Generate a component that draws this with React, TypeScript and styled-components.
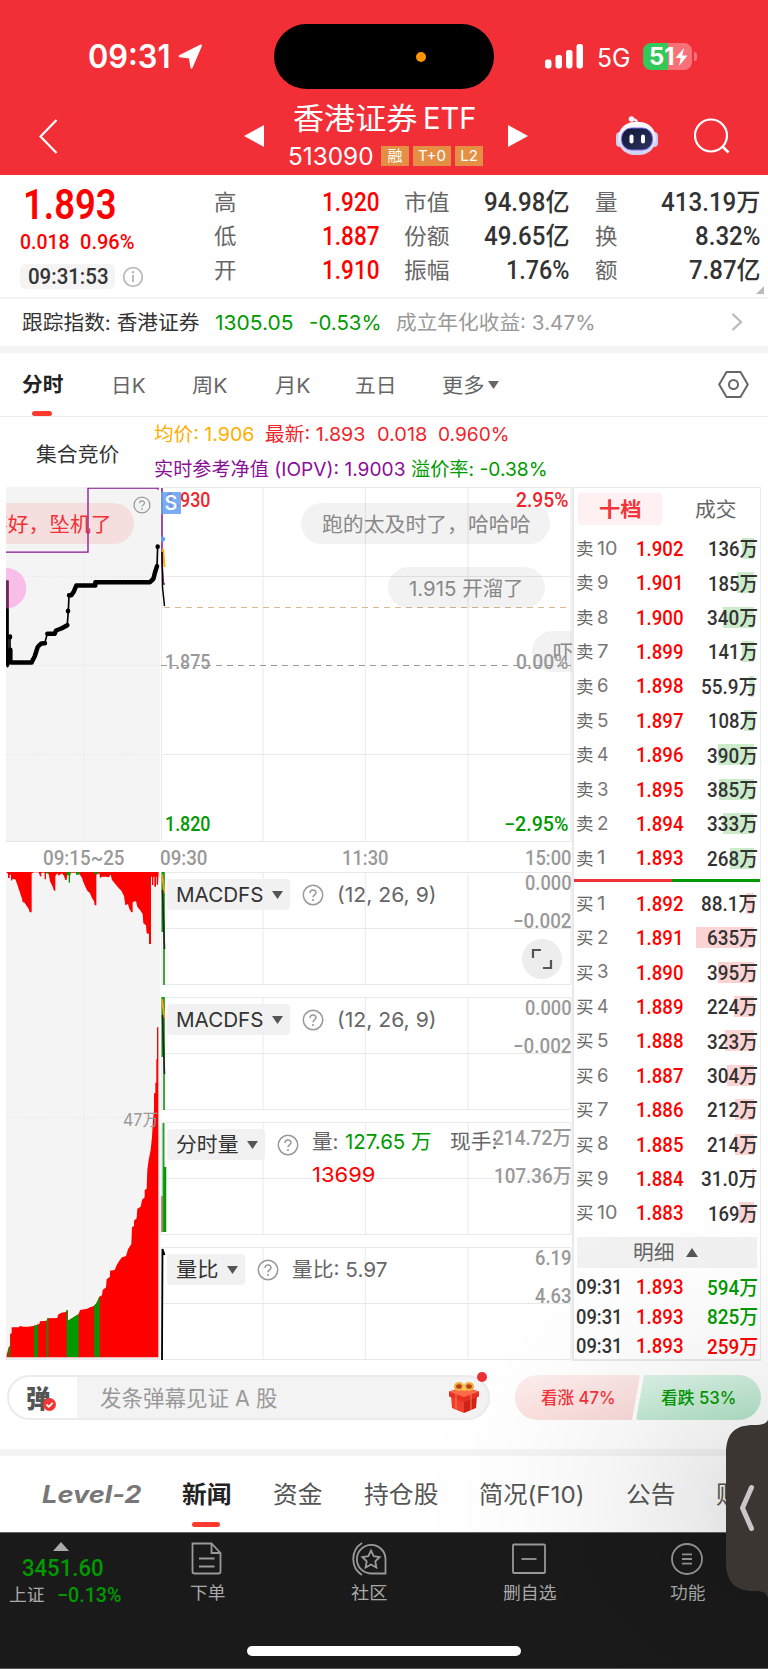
import React, { useLayoutEffect, useRef, useState } from 'react';
import styled, { createGlobalStyle, css } from 'styled-components';

const RED = '#f22f37';
const UP = '#ff0000';
const DOWN = '#009a00';
const LINE = '#e9e9e9';

const sans = `Inter, 'Noto Sans CJK SC', sans-serif`;
const din = `Roboto, 'Noto Sans CJK SC', sans-serif`;

const Global = createGlobalStyle`
  * { box-sizing: border-box; }
  body { margin: 0; background: #fff; font-family: ${sans}; color: #333; }
  svg { display: block; flex: none; }
`;

/* ---------- text squeezed to a column width ---------- */

type TextProps = {
  $size?: number;
  $color?: string;
  $weight?: number;
  $num?: boolean;
};

const textStyle = css<TextProps>`
  font-family: ${(p) => (p.$num ? din : sans)};
  font-size: ${(p) => p.$size ?? 20}px;
  font-weight: ${(p) => p.$weight ?? 400};
  color: ${(p) => p.$color ?? '#333'};
  line-height: 1.2;
`;

const FitBox = styled.span<TextProps & { $w: number; $ml: number }>`
  ${textStyle}
  display: inline-block;
  flex: none;
  width: ${(p) => p.$w}px;
  margin-left: ${(p) => p.$ml}px;
  white-space: pre;
`;

const FitInner = styled.span`
  display: inline-block;
  transform-origin: 0 50%;
  margin-left: -0.5px;
`;

function Fit({
  w,
  ml = 0,
  size,
  color,
  weight,
  num,
  children,
}: {
  w: number;
  ml?: number;
  size?: number;
  color?: string;
  weight?: number;
  num?: boolean;
  children: string;
}) {
  const ref = useRef<HTMLSpanElement>(null);
  const [scale, setScale] = useState(1);
  useLayoutEffect(() => {
    if (ref.current) {
      const natural = parseFloat(getComputedStyle(ref.current).width);
      if (natural > 0) setScale((w + 1.5) / natural);
    }
  }, [w, children]);
  return (
    <FitBox $w={w} $ml={ml} $size={size} $color={color} $weight={weight} $num={num}>
      <FitInner ref={ref} style={{ transform: `translateY(1px) scaleX(${scale})` }}>
        {children}
      </FitInner>
    </FitBox>
  );
}

/* ---------- shared ---------- */

const Page = styled.div`
  position: relative;
  width: 768px;
  height: 1669px;
  overflow: hidden;
  background: #fff;
  display: flex;
  flex-direction: column;
`;

const Overlay = styled.div<{ $x?: number; $r?: number; $y: number }>`
  position: absolute;
  ${(p) => (p.$r !== undefined ? `right: ${p.$r}px;` : `left: ${p.$x ?? 0}px;`)}
  top: ${(p) => p.$y}px;
  transform: translateY(-50%);
  display: flex;
  align-items: center;
`;

const Band = styled.div<{ $h: number }>`
  flex: none;
  height: ${(p) => p.$h}px;
  background: #f4f4f4;
`;

/* ---------- header ---------- */

const Header = styled.header`
  flex: none;
  height: 175px;
  background: ${RED};
  display: flex;
  flex-direction: column;
`;

const StatusBar = styled.div`
  height: 97px;
  padding: 16px 0 0 88px;
  display: flex;
  align-items: center;
`;

const Island = styled.div`
  width: 220px;
  height: 65px;
  margin-left: 71px;
  border-radius: 33px;
  background: #000;
  display: flex;
  align-items: center;
  padding-left: 142px;
  &::after {
    content: '';
    width: 10px;
    height: 10px;
    border-radius: 50%;
    background: #ff9500;
  }
`;

const Battery = styled.div`
  width: 49px;
  height: 27px;
  margin-left: 14px;
  border-radius: 8px;
  background: linear-gradient(90deg, #34c759 51%, #f77278 51%);
  display: flex;
  align-items: center;
  padding-left: 6px;
`;

const BatteryTip = styled.div`
  width: 3px;
  height: 9px;
  margin-left: 2px;
  border-radius: 0 4px 4px 0;
  background: #f77278;
`;

const NavBar = styled.div`
  height: 78px;
  display: flex;
  align-items: flex-start;
  padding-left: 39px;
`;

const TitleBlock = styled.div`
  width: 196px;
  margin: 0 24px 0 24px;
  display: flex;
  flex-direction: column;
`;

const TitleLine = styled.div<{ $h: number }>`
  height: ${(p) => p.$h}px;
  display: flex;
  align-items: center;
`;

const Tag = styled.span<{ $w: number }>`
  flex: none;
  width: ${(p) => p.$w}px;
  height: 20px;
  margin-right: 4px;
  background: #e58f45;
  color: #fff;
  font-size: 15px;
  line-height: 20px;
  text-align: center;
`;

const Tags = styled.div`
  margin-left: 9px;
  display: flex;
`;

const NavIcon = styled.div<{ $ml: number; $mt: number }>`
  margin-left: ${(p) => p.$ml}px;
  margin-top: ${(p) => p.$mt}px;
`;

function StatusIcons() {
  return (
    <svg width="39" height="25" viewBox="0 0 39 25" style={{ marginLeft: 51 }}>
      <rect x="0" y="15.5" width="6.5" height="9" rx="2.4" fill="#fff" />
      <rect x="10.5" y="11" width="6.5" height="13.5" rx="2.4" fill="#fff" />
      <rect x="21" y="6" width="6.5" height="18.5" rx="2.4" fill="#fff" />
      <rect x="31.5" y="0" width="6.5" height="24.5" rx="2.4" fill="#fff" />
    </svg>
  );
}

function Robot() {
  return (
    <svg width="44" height="42" viewBox="0 0 44 42">
      <defs>
        <linearGradient id="shell" x1="0" y1="0" x2="0" y2="1">
          <stop offset="0" stopColor="#ffffff" />
          <stop offset="1" stopColor="#cfd0f2" />
        </linearGradient>
        <linearGradient id="visor" x1="0" y1="0" x2="1" y2="1">
          <stop offset="0" stopColor="#0f1534" />
          <stop offset="1" stopColor="#2c3560" />
        </linearGradient>
      </defs>
      <path d="M21 8c2-1 0-4-3-3" fill="none" stroke="#e8e8fb" strokeWidth="2.4" />
      <circle cx="16.5" cy="4" r="2.8" fill="#f3f3ff" />
      <rect x="1" y="17" width="8" height="15" rx="4" fill="#c9cdf3" />
      <rect x="35" y="17" width="8" height="15" rx="4" fill="#c9cdf3" />
      <rect x="3" y="7" width="38" height="33" rx="16.5" fill="url(#shell)" />
      <rect x="6.5" y="13" width="31" height="22" rx="10" fill="url(#visor)" stroke="#7a6bf0" strokeWidth="1" />
      <rect x="14.5" y="19.5" width="4" height="9" rx="2" fill="#fff" />
      <rect x="26" y="19.5" width="4" height="9" rx="2" fill="#fff" />
    </svg>
  );
}

function TopHeader() {
  return (
    <Header>
      <StatusBar>
        <Fit w={81} size={32} weight={600} color="#fff">09:31</Fit>
        <svg width="25" height="25" viewBox="0 0 25 25" style={{ marginLeft: 9 }}>
          <path d="M23 1.5 13.5 23.5 11.8 13.4 1.6 12.2Z" fill="#fff" stroke="#fff" strokeWidth="2" strokeLinejoin="round" />
        </svg>
        <Island />
        <StatusIcons />
        <Fit ml={13} w={32} size={25} weight={400} color="#fff">5G</Fit>
        <Battery>
          <Fit w={24} size={24} weight={700} color="#fff">51</Fit>
          <svg width="13" height="18" viewBox="0 0 12 18" style={{ marginLeft: 2 }}>
            <path d="M8.5 0 0 10h5.2L3.5 18 12 7.5H6.8Z" fill="#fff" />
          </svg>
        </Battery>
        <BatteryTip />
      </StatusBar>
      <NavBar>
        <NavIcon $ml={0} $mt={22}>
          <svg width="20" height="35" viewBox="0 0 20 35">
            <path d="M17.5 1 1.5 17.5 17.5 34" fill="none" stroke="#fff" strokeWidth="2.2" />
          </svg>
        </NavIcon>
        <NavIcon $ml={185} $mt={28}>
          <svg width="20" height="22" viewBox="0 0 20 22">
            <path d="M20 0v22L0 11Z" fill="#fff" />
          </svg>
        </NavIcon>
        <TitleBlock>
          <TitleLine $h={40}>
            <Fit ml={5.5} w={123} size={30} color="#fff">香港证券</Fit>
            <Fit ml={7} w={52} size={30} color="#fff">ETF</Fit>
          </TitleLine>
          <TitleLine $h={38}>
            <Fit w={84} size={24} color="#fff">513090</Fit>
            <Tags>
              <Tag $w={28}>融</Tag>
              <Tag $w={38}>T+0</Tag>
              <Tag $w={28}>L2</Tag>
            </Tags>
          </TitleLine>
        </TitleBlock>
        <NavIcon $ml={0} $mt={28}>
          <svg width="20" height="22" viewBox="0 0 20 22">
            <path d="M0 0v22L20 11Z" fill="#fff" />
          </svg>
        </NavIcon>
        <NavIcon $ml={87} $mt={18}>
          <Robot />
        </NavIcon>
        <NavIcon $ml={35} $mt={21}>
          <svg width="36" height="36" viewBox="0 0 36 36">
            <circle cx="17" cy="17.5" r="16" fill="none" stroke="#fff" strokeWidth="2.2" />
            <path d="m28 28 6.5 6.5" stroke="#fff" strokeWidth="2.6" />
          </svg>
        </NavIcon>
      </NavBar>
    </Header>
  );
}

/* ---------- quote ---------- */

const Quote = styled.section`
  position: relative;
  flex: none;
  height: 124px;
  display: flex;
  border-bottom: 2px solid #f3f3f3;
`;

const PriceBlock = styled.div`
  width: 214px;
  padding: 7px 0 0 20px;
  display: flex;
  flex-direction: column;
`;

const PriceLine = styled.div<{ $h: number }>`
  height: ${(p) => p.$h}px;
  display: flex;
  align-items: center;
`;

const TimePill = styled.div`
  width: 95px;
  height: 25px;
  border-radius: 6px;
  background: #f4f4f4;
  padding-left: 8px;
  display: flex;
  align-items: center;
`;

const StatColumn = styled.div<{ $w: number; $ml: number }>`
  width: ${(p) => p.$w}px;
  margin-left: ${(p) => p.$ml}px;
  padding-top: 9px;
  display: flex;
  flex-direction: column;
`;

const StatRow = styled.div`
  height: 34.2px;
  display: flex;
  align-items: center;
  justify-content: space-between;
`;

type Stat = [string, number, string, number];

function Stats({ rows, w, ml, color }: { rows: Stat[]; w: number; ml: number; color: string }) {
  return (
    <StatColumn $w={w} $ml={ml}>
      {rows.map(([k, kw, v, vw]) => (
        <StatRow key={k}>
          <Fit w={kw} size={22} color="#666">{k}</Fit>
          <Fit w={vw} size={25.5} weight={500} num color={color}>{v}</Fit>
        </StatRow>
      ))}
    </StatColumn>
  );
}

const IndexRow = styled.div`
  flex: none;
  height: 46px;
  margin-bottom: 1px;
  padding-left: 22px;
  display: flex;
  align-items: center;
`;

function QuotePanel() {
  return (
    <>
      <Quote>
        <PriceBlock>
          <PriceLine $h={45}>
            <Fit ml={3.5} w={92} size={42} weight={600} num color={UP}>1.893</Fit>
          </PriceLine>
          <PriceLine $h={29}>
            <Fit w={48} size={21} weight={500} num color={UP}>0.018</Fit>
            <Fit ml={12} w={53} size={21} weight={500} num color={UP}>0.96%</Fit>
          </PriceLine>
          <PriceLine $h={41}>
            <TimePill>
              <Fit w={79} size={22} weight={500} num>09:31:53</Fit>
            </TimePill>
            <svg width="22" height="22" viewBox="0 0 22 22" style={{ marginLeft: 7 }}>
              <circle cx="11" cy="11" r="9.3" fill="none" stroke="#bbb" strokeWidth="1.8" />
              <path d="M11 9v7" stroke="#bbb" strokeWidth="2" />
              <circle cx="11" cy="6.3" r="1.3" fill="#bbb" />
            </svg>
          </PriceLine>
        </PriceBlock>
        <Stats w={164} ml={0} color={UP} rows={[['高', 21, '1.920', 56], ['低', 21, '1.887', 56], ['开', 21, '1.910', 56]]} />
        <Stats w={164} ml={26} color="#333" rows={[['市值', 44, '94.98亿', 84], ['份额', 44, '49.65亿', 84], ['振幅', 44, '1.76%', 62]]} />
        <Stats w={164} ml={27} color="#333" rows={[['量', 21, '413.19万', 98], ['换', 21, '8.32%', 64], ['额', 21, '7.87亿', 70]]} />
        <Overlay $r={4} $y={115}>
          <svg width="8" height="8" viewBox="0 0 8 8"><path d="M8 0v8H0Z" fill="#bbb" /></svg>
        </Overlay>
      </Quote>
      <IndexRow>
        <Fit w={176}>跟踪指数: 香港证券</Fit>
        <Fit ml={17} w={77} color={DOWN}>1305.05</Fit>
        <Fit ml={17} w={71} color={DOWN}>-0.53%</Fit>
        <Fit ml={16} w={198} color="#999">成立年化收益: 3.47%</Fit>
        <svg width="12" height="18" viewBox="0 0 12 18" style={{ marginLeft: 137 }}>
          <path d="m1.5 1 8.5 8-8.5 8" fill="none" stroke="#bbb" strokeWidth="2.4" />
        </svg>
      </IndexRow>
      <Band $h={7} />
    </>
  );
}

/* ---------- period tabs ---------- */

const Tabs = styled.nav`
  flex: none;
  height: 64px;
  padding-left: 22px;
  display: flex;
  align-items: center;
  border-bottom: 1px solid #ededed;
`;

const Tab = styled.div<{ $active?: boolean; $ml: number; $bar?: number; $drop?: number }>`
  position: relative;
  margin-left: ${(p) => p.$ml}px;
  display: flex;
  align-items: center;
  ${(p) =>
    p.$active &&
    css`
      &::after {
        content: '';
        position: absolute;
        left: calc(50% - ${p.$bar! / 2}px);
        bottom: -${p.$drop}px;
        width: ${p.$bar}px;
        height: 5px;
        border-radius: 2.5px;
        background: #ff3b30;
      }
    `}
`;

function PeriodTabs() {
  return (
    <Tabs>
      <Tab $active $ml={0} $bar={20} $drop={19}><Fit w={40} size={20.5} weight={700} color="#222">分时</Fit></Tab>
      <Tab $ml={49}><Fit w={33} color="#666">日K</Fit></Tab>
      <Tab $ml={48}><Fit w={34} color="#666">周K</Fit></Tab>
      <Tab $ml={49}><Fit w={34} color="#666">月K</Fit></Tab>
      <Tab $ml={46}><Fit w={40} color="#666">五日</Fit></Tab>
      <Tab $ml={47}>
        <Fit w={41} color="#666">更多</Fit>
        <svg width="11" height="8" viewBox="0 0 11 8" style={{ marginLeft: 5 }}><path d="M0 0h11L5.5 8Z" fill="#666" /></svg>
      </Tab>
      <svg width="31" height="27" viewBox="0 0 31 27" style={{ marginLeft: 219 }}>
        <path d="M8.5 1h14L29.8 13.5 22.5 26h-14L1.2 13.5Z" fill="none" stroke="#666" strokeWidth="2" strokeLinejoin="round" />
        <circle cx="15.5" cy="13.5" r="4.5" fill="none" stroke="#666" strokeWidth="2" />
      </svg>
    </Tabs>
  );
}

const Legend = styled.div`
  flex: none;
  height: 70px;
  padding-left: 36px;
  display: flex;
  align-items: center;
`;

const LegendLines = styled.div`
  margin-left: 36px;
  display: flex;
  flex-direction: column;
`;

const LegendLine = styled.div`
  height: 34.5px;
  display: flex;
  align-items: center;
`;

const LegendTitle = styled.div`
  padding-top: 3px;
`;

function ChartLegend() {
  return (
    <Legend>
      <LegendTitle><Fit w={82}>集合竞价</Fit></LegendTitle>
      <LegendLines>
        <LegendLine>
          <Fit w={99} size={19} color="#ffae00">均价: 1.906</Fit>
          <Fit ml={12} w={99} size={19} color="#f0252b">最新: 1.893</Fit>
          <Fit ml={13} w={49} size={19} color="#f0252b">0.018</Fit>
          <Fit ml={12} w={70} size={19} color="#f0252b">0.960%</Fit>
        </LegendLine>
        <LegendLine>
          <Fit w={250} size={19} color="#8b0f96">实时参考净值 (IOPV): 1.9003</Fit>
          <Fit ml={7} w={135} size={19} color={DOWN}>溢价率: -0.38%</Fit>
        </LegendLine>
      </LegendLines>
    </Legend>
  );
}

/* ---------- charts ---------- */

const Board = styled.section`
  flex: none;
  height: 874px;
  padding-left: 6px;
  display: flex;
`;

const AuctionColumn = styled.div`
  width: 154px;
  height: 873px;
  display: flex;
  flex-direction: column;
`;

const MainColumn = styled.div`
  width: 411px;
  height: 873px;
  margin-left: 0.5px;
  display: flex;
  flex-direction: column;
`;

const Pane = styled.div<{ $h: number }>`
  position: relative;
  flex: none;
  height: ${(p) => p.$h}px;
  overflow: hidden;
`;

const AxisRow = styled.div`
  flex: none;
  height: 30px;
  display: flex;
  align-items: center;
`;

const Gap = styled.div`
  flex: none;
  height: 12px;
`;

const Danmu = styled.div<{ $x: number; $y: number; $w: number; $hot?: boolean }>`
  position: absolute;
  left: ${(p) => p.$x}px;
  top: ${(p) => p.$y}px;
  width: ${(p) => p.$w}px;
  height: 41px;
  border-radius: 21px;
  background: ${(p) => (p.$hot ? 'rgba(255,110,110,.16)' : 'rgba(0,0,0,.05)')};
  display: flex;
  align-items: center;
  padding-left: 21px;
`;

const Signal = styled.div`
  position: absolute;
  left: 0.5px;
  top: 5px;
  width: 20px;
  height: 22px;
  background: rgba(98, 160, 245, 0.85);
  color: #fff;
  font: 500 20px/22px ${sans};
  text-align: center;
`;

function Help({ r = 10 }: { r?: number }) {
  return (
    <svg width={r * 2 + 2} height={r * 2 + 2} viewBox="0 0 22 22">
      <circle cx="11" cy="11" r="9.7" fill="none" stroke="#999" strokeWidth="1.5" />
      <path d="M8 9c0-4 6-4 6-.4 0 2.3-3 2.2-3 4.6" fill="none" stroke="#999" strokeWidth="1.5" />
      <circle cx="11" cy="16" r="1.1" fill="#999" />
    </svg>
  );
}

const auctionLine =
  '22,300 22,560 30,545 30,468 30,545 95,545 104,528 112,497 120,496 124,488 134,488 142,460 164,459 166,450 180,448 184,440 196,438 202,430 205,391 207,344 214,343 229,315 286,314 286,304 450,303 454,296 462,293 465,276 471,257 473,198';

function AuctionChart() {
  return (
    <Pane $h={355}>
      <svg width="154" height="355" viewBox="18 21 462 1065">
        <rect x="18" y="21" width="462" height="1065" fill="#f4f4f4" />
        <path d="M252 21V1086M18 290H480M18 824H480" stroke="#e6e6e6" strokeWidth="3" strokeDasharray="5 6" />
        <path d="M18 556H480" stroke="#ececec" strokeWidth="3" />
        <path d="M18 1085H480" stroke="#e4e4e4" strokeWidth="3" />
      </svg>
      <Danmu $x={-45} $y={16} $w={173} $hot>
        <Fit ml={5} w={123} size={20} color="#f23036">不好，坠机了</Fit>
      </Danmu>
      <Overlay $x={0} $y={177.5}>
        <svg width="154" height="355" viewBox="18 21 462 1065">
          <circle cx="18" cy="323" r="61" fill="#f8bde8" />
          <path d="M18 215H264V23H474V28" fill="none" stroke="#8b1295" strokeWidth="4" />
          <polyline points={auctionLine} fill="none" stroke="#000" strokeWidth="5" />
          <path d="M22 300V384" stroke="#6b2a58" strokeWidth="9" />
          <path d="M22 384V556" stroke="#000" strokeWidth="9" />
          <path
            d="M30 468V470M31 508V545M34 546H95M95 545L104 528 113 500M116 496 124 489 135 488M142 460H164L168 450 184 444 202 434M204 391V392M207 344H214L222 332 229 315H286V305H450L460 295 465 276 471 257M473 198V199"
            fill="none"
            stroke="#000"
            strokeWidth="13.5"
            strokeLinecap="round"
            strokeLinejoin="round"
          />
        </svg>
      </Overlay>
      <Overlay $x={127} $y={17.5}><Help r={8} /></Overlay>
    </Pane>
  );
}

const macdShape =
  'M20 36V40H24V54H29V44H33V64L37 58H46L50 68 54 80 58 92 62 104 66 116 68 126 74 128 80 138 86 146 89 157H95V40L103 37H116L120 48 124 50V38H134V58H138V38L146 42 150 64 158 80 162 92H166V48L172 40 176 47 186 40 192 48 196 60H200L202 38H236L246 54 250 66 256 80 262 92 270 100 276 114 282 124 284 136H289V44L298 40 300 54 306 50 318 50 326 52 332 44 336 60 346 72 354 82 364 92 372 108 376 136 384 132 388 146 394 157H398V126L408 124 412 140 420 150 428 162 430 190 438 196 440 220 447 222V252H453V50H456V75H460V50H463V80H468V50H470V74H474L476 36Z';

const volumeShape =
  'M20 742V735L26 712 30 708V672L35 670V652H56L60 648 70 650H84L100 648 118 642 120 634 140 632 142 625 172 624 174 614 184 608 198 606 200 600H204V632L236 612 240 600 262 596 270 592 282 588 290 578 296 565 298 560 306 556 308 540 318 532 320 508 330 500V482L344 480 350 466 358 452 366 442 378 438 384 418 394 402 396 352 402 348V332L410 325 412 296 422 290 426 270 434 262V240L440 236 442 180 446 150 452 120 456 80 459 30 462 0V-50H466V-82H469V-152H471V-248H475V742Z';

function AuctionVolume() {
  return (
    <Pane $h={488}>
      <svg width="154" height="488" viewBox="18 36 462 1464">
        <defs><clipPath id="vol"><path d={volumeShape} /></clipPath></defs>
        <rect x="18" y="36" width="462" height="1460" fill="#f4f4f4" />
        <path d="M252 36V1496M18 772H480" stroke="#e6e6e6" strokeWidth="3" strokeDasharray="5 6" />
        <path d={macdShape} fill="#f00" />
        <path d="M200 36h12v10h-2v22h-4v-22h-6zM282 36h10v6h-10zM138 36h8v4h-8zM228 36h10v8h-10z" fill={DOWN} />
        <g transform="translate(0 750)">
          <path d={volumeShape} fill="#f00" />
          <path clipPath="url(#vol)" d="M26 560h5v182h-5zM102 560h12v182h-12zM140 560h5v182h-5zM200 560h36v182h-36zM282 500h17v242h-17z" fill={DOWN} />
          <path d="M104 645V742M113 640V742M283 588V742M290 578V742" stroke="#a33c00" strokeWidth="1.5" opacity=".5" />
        </g>
        <path d="M18 1497H480" stroke="#e4e4e4" strokeWidth="5" />
      </svg>
      <Overlay $r={3} $y={246}><Fit w={34} size={17.5} color="#999">47万</Fit></Overlay>
    </Pane>
  );
}

function Grid({ h, mid, children }: { h: number; mid?: boolean; children?: React.ReactNode }) {
  return (
    <svg width="411" height={h} viewBox={`0 0 411 ${h}`}>
      <path d={`M0.5 .5H410V${h - 0.5}H.5ZM102 0V${h}M204.3 0V${h}M307 0V${h}`} fill="none" stroke={LINE} strokeWidth="1" />
      <path d={mid ? `M0 ${h / 2}H410` : `M0 89.5H410M0 267.5H410`} stroke={LINE} strokeWidth="1" />
      {children}
    </svg>
  );
}

function PriceChart() {
  return (
    <Pane $h={355}>
      <Grid h={355}>
        <path d="M3 120.5H410" stroke="#dcb98f" strokeWidth="1.2" strokeDasharray="6 5" />
        <path d="M0 178.5H410" stroke="#999" strokeWidth="1.2" strokeDasharray="6 5" />
        <path d="M1 1V75L2.5 97H4" fill="none" stroke="#8b1295" strokeWidth="1.5" />
        <path d="M2 62 3.5 80" stroke="#ffae00" strokeWidth="2" />
        <path d="M1 65 1.5 100 3.5 119" fill="none" stroke="#000" strokeWidth="1.5" />
        <circle cx="1.5" cy="52" r="2.5" fill="#5c9cf5" />
      </Grid>
      <Danmu $x={140.5} $y={16} $w={249}><Fit w={207} size={20} color="#888">跑的太及时了，哈哈哈</Fit></Danmu>
      <Danmu $x={227.5} $y={80} $w={157}><Fit w={113} size={20} color="#888">1.915 开溜了</Fit></Danmu>
      <Danmu $x={371.5} $y={144} $w={140}><Fit w={100} size={20} color="#888">吓死我了呀</Fit></Danmu>
      <Overlay $x={5} $y={13}><Fit w={44} size={19.5} weight={500} num color="#f0252b">1.930</Fit></Overlay>
      <Signal>S</Signal>
      <Overlay $r={4} $y={13}><Fit w={51} size={19.5} weight={500} num color="#f0252b">2.95%</Fit></Overlay>
      <Overlay $x={5} $y={175}><Fit w={44} size={19.5} weight={500} num color="#999">1.875</Fit></Overlay>
      <Overlay $r={4} $y={175}><Fit w={51} size={19.5} weight={500} num color="#999">0.00%</Fit></Overlay>
      <Overlay $x={5} $y={336.5}><Fit w={44} size={19.5} weight={500} num color={DOWN}>1.820</Fit></Overlay>
      <Overlay $r={4} $y={336.5}><Fit w={63} size={19.5} weight={500} num color={DOWN}>−2.95%</Fit></Overlay>
    </Pane>
  );
}

const IndicatorHead = styled.div<{ $y: number }>`
  position: absolute;
  left: 6.5px;
  top: ${(p) => p.$y}px;
  height: 31px;
  display: flex;
  align-items: center;
`;

const Picker = styled.div<{ $w: number }>`
  width: ${(p) => p.$w}px;
  height: 31px;
  margin-right: 12px;
  padding: 0 7px 0 9px;
  border-radius: 4px;
  background: #f1f1f1;
  display: flex;
  align-items: center;
  justify-content: space-between;
`;

const ExpandButton = styled.div`
  position: absolute;
  left: 361px;
  top: 67px;
  width: 40px;
  height: 40px;
  border-radius: 50%;
  background: #ededed;
  display: flex;
  align-items: center;
  justify-content: center;
`;

function Indicator({
  name,
  nameW,
  w,
  top,
  low,
  topW,
  lowW,
  shift = 0,
  plot,
  corner,
  children,
}: {
  name: string;
  nameW: number;
  w: number;
  top: string;
  low: string;
  topW: number;
  lowW: number;
  shift?: number;
  plot: React.ReactNode;
  corner?: React.ReactNode;
  children: React.ReactNode;
}) {
  return (
    <Pane $h={113}>
      <Grid h={113} mid>{plot}</Grid>
      <IndicatorHead $y={7}>
        <Picker $w={w}>
          <Fit w={nameW} size={20.5}>{name}</Fit>
          <svg width="11" height="8" viewBox="0 0 11 8"><path d="M0 0h11L5.5 8Z" fill="#555" /></svg>
        </Picker>
        <Help />
        {children}
      </IndicatorHead>
      <Overlay $r={1.5} $y={10 + shift}><Fit w={topW} size={20} weight={500} num color="#999">{top}</Fit></Overlay>
      <Overlay $r={1.5} $y={48 + shift}><Fit w={lowW} size={20} weight={500} num color="#999">{low}</Fit></Overlay>
      {corner}
    </Pane>
  );
}

const macdPlot = (
  <>
    <path d="M3 0V113" stroke="#3aa83a" strokeWidth="2" />
    <path d="M1.5 0V60" stroke={DOWN} strokeWidth="2" />
    <path d="M1 2 3.5 21" stroke="#ff9a1a" strokeWidth="1.8" />
    <path d="M1.5 18 3.5 77" stroke="#222" strokeWidth="1.6" />
  </>
);

function Macd({ expandable }: { expandable?: boolean }) {
  return (
    <Indicator
      name="MACDFS"
      nameW={86}
      w={123}
      top="0.000"
      low="−0.002"
      topW={45}
      lowW={57}
      plot={macdPlot}
      corner={
        expandable && (
          <ExpandButton>
            <svg width="22" height="22" viewBox="0 0 22 22">
              <path d="M2 10V2h8M20 12v8h-8" fill="none" stroke="#555" strokeWidth="2.2" />
            </svg>
          </ExpandButton>
        )
      }
    >
      <Fit ml={13} w={98} size={20.5} color="#666">(12, 26, 9)</Fit>
    </Indicator>
  );
}

const VolumeInfo = styled.div`
  align-self: flex-start;
  margin: -4px 0 0 12px;
  display: flex;
  flex-direction: column;
`;

const VolumeLine = styled.div`
  height: 33px;
  display: flex;
  align-items: center;
`;

function MainCharts() {
  return (
    <MainColumn>
      <PriceChart />
      <AxisRow>
        <Fit w={46} size={20} weight={500} num color="#999">09:30</Fit>
        <Fit ml={136} w={45} size={20} weight={500} num color="#999">11:30</Fit>
        <Fit ml={138} w={45} size={20} weight={500} num color="#999">15:00</Fit>
      </AxisRow>
      <Macd expandable />
      <Gap />
      <Macd />
      <Gap />
      <Indicator
        name="分时量"
        nameW={61}
        w={98}
        top="214.72万"
        low="107.36万"
        topW={77}
        lowW={76}
        shift={5}
        plot={
          <>
            <path d="M1 74V110" stroke="#e05a4a" strokeWidth="1.5" />
            <path d="M2.5 1V110" stroke="#2c9d2c" strokeWidth="2" />
            <path d="M4 45V110" stroke={DOWN} strokeWidth="2.5" />
          </>
        }
      >
        <VolumeInfo>
          <VolumeLine>
            <Fit ml={1} w={25} size={20.5} color="#666">量:</Fit>
            <Fit ml={8} w={85} size={20.5} color={DOWN}>127.65 万</Fit>
            <Fit ml={20} w={46} size={20.5} color="#666">现手:</Fit>
          </VolumeLine>
          <VolumeLine>
            <Fit ml={1} w={62} size={20.5} color={UP}>13699</Fit>
          </VolumeLine>
        </VolumeInfo>
      </Indicator>
      <Gap />
      <Indicator
        name="量比"
        nameW={41}
        w={78}
        top="6.19"
        low="4.63"
        topW={35}
        lowW={35}
        plot={<path d="M1 113 1.5 2 3.5 8" fill="none" stroke="#000" strokeWidth="1.8" />}
      >
        <Fit ml={13} w={94} size={20.5} color="#666">量比: 5.97</Fit>
      </Indicator>
    </MainColumn>
  );
}

/* ---------- order book ---------- */

const Book = styled.aside`
  width: 189px;
  height: 874px;
  border: solid #e9e9e9;
  border-width: 1px 1px 2px 2px;
  display: flex;
  flex-direction: column;
`;

const BookTabs = styled.div`
  height: 32px;
  margin: 5px 0 6px 4px;
  display: flex;
  align-items: center;
`;

const BookTab = styled.div`
  width: 84px;
  height: 32px;
  border-radius: 3px;
  background: #fff1f1;
  display: flex;
  align-items: center;
  justify-content: center;
`;

const BookRow = styled.div<{ $h?: number }>`
  position: relative;
  flex: none;
  height: ${(p) => p.$h ?? 34.4}px;
  padding: 0 3px;
  display: flex;
  align-items: center;
`;

const Depth = styled.div<{ $side: 'sell' | 'buy' }>`
  position: absolute;
  right: 6px;
  top: 7px;
  height: 21px;
  background: ${(p) => (p.$side === 'sell' ? '#cbebcb' : '#fbd3d3')};
`;

const Level = styled.div`
  width: 60px;
  display: flex;
  align-items: center;
`;

const Amount = styled.div`
  position: relative;
  flex: 1;
  display: flex;
  justify-content: flex-end;
`;

const Split = styled.div`
  flex: none;
  height: 3px;
  margin: 4px 0;
  background: linear-gradient(90deg, #ee3338 98px, ${DOWN} 98px);
`;

const DetailBar = styled.div`
  flex: none;
  width: 180px;
  height: 31px;
  margin: 7px 0 4px 3px;
  background: #f2f2f2;
  display: flex;
  align-items: center;
  padding-left: 57px;
`;

type Quotes = [string, string, string, number][];

const sells: Quotes = [
  ['10', '1.902', '136万', 12],
  ['9', '1.901', '185万', 17],
  ['8', '1.900', '340万', 31],
  ['7', '1.899', '141万', 12],
  ['6', '1.898', '55.9万', 5],
  ['5', '1.897', '108万', 9.5],
  ['4', '1.896', '390万', 36],
  ['3', '1.895', '385万', 35],
  ['2', '1.894', '333万', 31],
  ['1', '1.893', '268万', 24],
];

const buys: Quotes = [
  ['1', '1.892', '88.1万', 8],
  ['2', '1.891', '635万', 58],
  ['3', '1.890', '395万', 36],
  ['4', '1.889', '224万', 20],
  ['5', '1.888', '323万', 29],
  ['6', '1.887', '304万', 27],
  ['7', '1.886', '212万', 19],
  ['8', '1.885', '214万', 19],
  ['9', '1.884', '31.0万', 2],
  ['10', '1.883', '169万', 15],
];

const trades: [string, string, string, string][] = [
  ['09:31', '1.893', '594万', DOWN],
  ['09:31', '1.893', '825万', DOWN],
  ['09:31', '1.893', '259万', UP],
];

const amountWidth = (s: string) => (s.includes('.') ? 55 : s.startsWith('1') ? 48.5 : 49.5);

function Levels({ side, rows }: { side: 'sell' | 'buy'; rows: Quotes }) {
  return (
    <>
      {rows.map(([n, price, amount, depth]) => (
        <BookRow key={n}>
          <Depth $side={side} style={{ width: depth }} />
          <Level>
            <Fit w={16} size={17} color="#666">{side === 'sell' ? '卖' : '买'}</Fit>
            <Fit ml={5} w={n === '10' ? 19 : n === '1' ? 7 : 10} size={19} color="#777">{n}</Fit>
          </Level>
          <Fit w={46} size={20.5} weight={500} num color={UP}>{price}</Fit>
          <Amount><Fit w={amountWidth(amount)} size={20} weight={500} num>{amount}</Fit></Amount>
        </BookRow>
      ))}
    </>
  );
}

function OrderBook() {
  return (
    <Book>
      <BookTabs>
        <BookTab><Fit w={41} size={20.5} weight={700} color="#f5333a">十档</Fit></BookTab>
        <Fit ml={34} w={40} size={20.5} color="#666">成交</Fit>
      </BookTabs>
      <Levels side="sell" rows={sells} />
      <Split />
      <Levels side="buy" rows={buys} />
      <DetailBar>
        <Fit w={40} size={20.5} color="#666">明细</Fit>
        <svg width="12" height="9" viewBox="0 0 12 9" style={{ marginLeft: 12 }}><path d="M0 9h12L6 0Z" fill="#555" /></svg>
      </DetailBar>
      {trades.map(([t, p, a, c], i) => (
        <BookRow key={i} $h={29.5}>
          <Level><Fit w={45} size={20.5} weight={500} num>{t}</Fit></Level>
          <Fit w={46} size={20.5} weight={500} num color={UP}>{p}</Fit>
          <Amount><Fit w={49.5} size={20} weight={500} num color={c}>{a}</Fit></Amount>
        </BookRow>
      ))}
    </Book>
  );
}

/* ---------- comment bar ---------- */

const CommentRow = styled.div`
  flex: none;
  height: 88px;
  padding: 14px 0 0 7px;
  display: flex;
  align-items: flex-start;
`;

const CommentBox = styled.div`
  position: relative;
  width: 483px;
  height: 45px;
  border: 2px solid #ebebeb;
  border-radius: 23px;
  background: linear-gradient(90deg, #fff 68px, #f3f3f3 68px);
  display: flex;
  align-items: center;
  padding-left: 16px;
`;

const AlertDot = styled.div`
  position: absolute;
  right: 1px;
  top: -5px;
  width: 10px;
  height: 10px;
  border-radius: 50%;
  background: #ee2f35;
`;

const CheckBadge = styled.div`
  position: absolute;
  left: 34px;
  top: 21px;
`;

const Vote = styled.div<{ $up?: boolean }>`
  flex: none;
  width: 125px;
  height: 45px;
  margin-left: ${(p) => (p.$up ? 25 : -4)}px;
  padding-left: 26px;
  display: flex;
  align-items: center;
  ${(p) =>
    p.$up
      ? css`
          border-radius: 23px 3px 3px 23px;
          background: linear-gradient(170deg, #fdeeee, #fad9d7);
          clip-path: polygon(0 0, 100% 0, calc(100% - 8px) 100%, 0 100%);
        `
      : css`
          border-radius: 3px 23px 23px 3px;
          background: linear-gradient(170deg, #def4e8, #b4e6ca);
          clip-path: polygon(8px 0, 100% 0, 100% 100%, 0 100%);
        `}
`;

function Gift() {
  return (
    <svg width="30" height="32" viewBox="0 0 30 32" style={{ marginLeft: 172 }}>
      <path d="M2 14 15 19v12L3 26Z" fill="#f0402f" />
      <path d="M28 14 15 19v12l12-5Z" fill="#cf2218" />
      <path d="M0 9.5 15 5l15 4.500v5L15 20 0 14.500Z" fill="#e63022" />
      <path d="M0 9.500 15 5l15 4.500L15 15Z" fill="#ff6a4a" />
      <path d="M7 12v16M22 12v16" stroke="#ff7c45" strokeWidth="1.5" opacity=".7" />
      <ellipse cx="10" cy="4.500" rx="4" ry="3.300" fill="#b5421b" stroke="#f3ae3d" strokeWidth="2.200" />
      <ellipse cx="20" cy="4.500" rx="4" ry="3.300" fill="#b5421b" stroke="#f3ae3d" strokeWidth="2.200" />
      <circle cx="15" cy="6.500" r="2.400" fill="#f8c65c" />
    </svg>
  );
}

function CommentBar() {
  return (
    <CommentRow>
      <CommentBox>
        <Fit ml={1.5} w={23} size={25} weight={900} color="#555">弹</Fit>
        <CheckBadge>
          <svg width="13" height="13" viewBox="0 0 13 13">
            <circle cx="6.5" cy="6.5" r="6.5" fill="#f5352f" />
            <path d="m3.5 6.500 2.300 2.300 3.900-4" fill="none" stroke="#fff" strokeWidth="1.8" />
          </svg>
        </CheckBadge>
        <Fit ml={51} w={176} size={22} color="#999">发条弹幕见证 A 股</Fit>
        <Gift />
        <AlertDot />
      </CommentBox>
      <Vote $up><Fit w={73} size={17} weight={500} color="#f5333a">看涨 47%</Fit></Vote>
      <Vote><Fit ml={-1} w={74} size={17} weight={500} color={DOWN}>看跌 53%</Fit></Vote>
    </CommentRow>
  );
}

/* ---------- section tabs and bottom bar ---------- */

const SectionTabs = styled.nav`
  flex: none;
  height: 76px;
  padding-left: 42px;
  display: flex;
  align-items: center;
`;

const LevelLogo = styled.div`
  font-style: italic;
`;

const BottomBar = styled.footer`
  position: relative;
  flex: none;
  height: 137px;
  background: #1a1a1a;
  border-top: 1px solid #666;
  border-bottom: 1px solid #555;
  display: flex;
  align-items: flex-start;
`;

const IndexBlock = styled.div`
  flex: none;
  width: 144px;
  padding: 9px 0 0 9px;
  display: flex;
  flex-direction: column;
`;

const IndexLine = styled.div<{ $h: number; $pl: number }>`
  height: ${(p) => p.$h}px;
  padding-left: ${(p) => p.$pl}px;
  display: flex;
  align-items: center;
`;

const Action = styled.div<{ $w: number }>`
  flex: none;
  width: ${(p) => p.$w}px;
  padding-top: 8px;
  display: flex;
  flex-direction: column;
  align-items: center;
  gap: 5px;
`;

const HomeBar = styled.div`
  position: absolute;
  left: 247px;
  bottom: 12px;
  width: 274px;
  height: 10px;
  border-radius: 5px;
  background: #fff;
`;

const icon = { fill: 'none', stroke: '#9a9a9a', strokeWidth: 1.8 } as const;

function Bottom() {
  return (
    <BottomBar>
      <IndexBlock>
        <IndexLine $h={9} $pl={44}>
          <svg width="16" height="9" viewBox="0 0 16 9"><path d="M0 9h16L8 0Z" fill="#aaa" /></svg>
        </IndexLine>
        <IndexLine $h={32} $pl={13}><Fit w={80} size={24} weight={500} num color={DOWN}>3451.60</Fit></IndexLine>
        <IndexLine $h={22} $pl={0}>
          <Fit ml={0.5} w={34} size={17} color="#aaa">上证</Fit>
          <Fit ml={13.5} w={63} size={20.5} num weight={500} color={DOWN}>−0.13%</Fit>
        </IndexLine>
      </IndexBlock>
      <Action $w={126}>
        <svg width="36" height="36" viewBox="0 0 36 36">
          <path d="M3.5 2.500h19l9 9.500v18.500q0 2-2 2h-24q-2 0-2-2ZM22.500 2.500V12h9M10 17.500h15.500M10 25.500h15.500" {...icon} />
        </svg>
        <Fit w={34} size={17} color="#aaa">下单</Fit>
      </Action>
      <Action $w={198}>
        <svg width="36" height="36" viewBox="0 0 36 36">
          <path d="M34.5 32.500H20A14.300 14.300 0 1 1 34.500 18ZM11 2a19 19 0 0 0 0 32" {...icon} />
          <path d="m20 9.500 2.700 5.600 6 .9-4.400 4.300 1.100 6.200-5.400-3-5.400 3 1.100-6.200-4.400-4.300 6-.9Z" {...icon} />
        </svg>
        <Fit w={35} size={17} color="#aaa">社区</Fit>
      </Action>
      <Action $w={122}>
        <svg width="36" height="36" viewBox="0 0 36 36">
          <rect x="2" y="3.5" width="32" height="28.5" rx="1" {...icon} />
          <path d="M10.5 18h15" {...icon} />
        </svg>
        <Fit w={52} size={17} color="#aaa">删自选</Fit>
      </Action>
      <Action $w={194}>
        <svg width="36" height="36" viewBox="0 0 36 36">
          <circle cx="18" cy="18" r="15" {...icon} />
          <path d="M13 13.300h10M13 18h10M13 22.600h10" {...icon} />
        </svg>
        <Fit w={34} size={17} color="#aaa">功能</Fit>
      </Action>
      <HomeBar />
    </BottomBar>
  );
}

const Shade = styled.div`
  position: absolute;
  right: 0;
  top: 1160px;
  width: 380px;
  height: 508px;
  background: radial-gradient(
    ellipse 350px 330px at 100% 68%,
    rgba(0, 0, 0, 0.14),
    rgba(0, 0, 0, 0.08) 22%,
    rgba(0, 0, 0, 0.035) 48%,
    rgba(0, 0, 0, 0.012) 72%,
    transparent
  );
  pointer-events: none;
`;

const Handle = styled.div`
  position: absolute;
  right: 0;
  top: 1420px;
`;

export default function App() {
  return (
    <>
      <Global />
      <Page>
        <TopHeader />
        <QuotePanel />
        <PeriodTabs />
        <ChartLegend />
        <Board>
          <AuctionColumn>
            <AuctionChart />
            <AxisRow><Fit ml={37} w={80} size={20} weight={500} num color="#999">09:15~25</Fit></AxisRow>
            <AuctionVolume />
          </AuctionColumn>
          <MainCharts />
          <OrderBook />
        </Board>
        <CommentBar />
        <Band $h={7} />
        <SectionTabs>
          <LevelLogo><Fit w={98} size={24} weight={700} color="#777">Level-2</Fit></LevelLogo>
          <Tab $active $ml={42} $bar={28} $drop={19}><Fit w={48} size={23.5} weight={700} color="#222">新闻</Fit></Tab>
          <Tab $ml={43}><Fit w={48} size={23.5} color="#555">资金</Fit></Tab>
          <Tab $ml={43}><Fit w={73} size={23.5} color="#555">持仓股</Fit></Tab>
          <Tab $ml={42}><Fit w={104} size={23.5} color="#555">简况(F10)</Fit></Tab>
          <Tab $ml={43}><Fit w={48} size={23.5} color="#555">公告</Fit></Tab>
          <Tab $ml={42}><Fit w={48} size={23.5} color="#555">财务</Fit></Tab>
        </SectionTabs>
        <Bottom />
        <Shade />
        <Handle>
          <svg width="42" height="178" viewBox="0 0 42 178">
            <path d="M42 0C40 4 36 5 28 5 9 5 0 13 0 34V142C0 162 9 171 28 171 36 171 40 172 42 178Z" fill="#3c3632" />
            <path d="M25.5 67.500 16.500 88 25.500 108.500" fill="none" stroke="#cdc6c8" strokeWidth="5" strokeLinecap="round" strokeLinejoin="round" />
          </svg>
        </Handle>
      </Page>
    </>
  );
}
